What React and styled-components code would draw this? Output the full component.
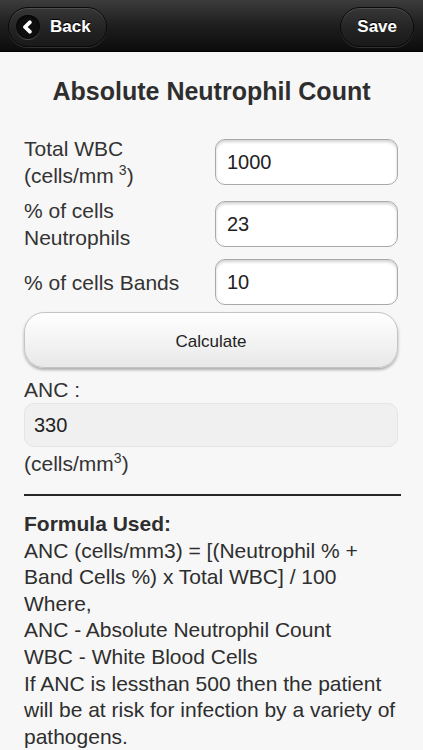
import React from 'react'
import styled, { createGlobalStyle } from 'styled-components'

const GlobalStyle = createGlobalStyle`
  html, body {
    margin: 0;
    padding: 0;
    background: #f7f7f7;
    font-family: "Liberation Sans", Arial, Helvetica, sans-serif;
    color: #333;
  }
`

const Page = styled.div`
  width: 423px;
  min-height: 750px;
  background: #f7f7f7;
  overflow: hidden;
`

const Header = styled.header`
  height: 52px;
  box-sizing: border-box;
  display: flex;
  align-items: center;
  justify-content: space-between;
  padding: 2px 9px 0 8px;
  background: linear-gradient(#3c3c3c, #1e1e1e 50%, #0c0c0c);
  border-bottom: 1px solid #000;
`

const NavButton = styled.button`
  height: 40px;
  box-sizing: border-box;
  display: flex;
  align-items: center;
  gap: 10px;
  padding: ${(p) => (p.$icon ? '0 15px 0 7px' : '0 16px')};
  border-radius: 20px;
  border: 1px solid #0a0a0a;
  background: linear-gradient(#363636, #222 60%, #1a1a1a);
  box-shadow: inset 0 1px 0 rgba(255, 255, 255, 0.12), 0 1px 0 rgba(255, 255, 255, 0.14);
  color: #fff;
  font-family: inherit;
  font-size: 17px;
  font-weight: bold;
  text-shadow: 0 -1px 0 #000;
`

const BackIcon = styled.span`
  width: 24px;
  height: 24px;
  border-radius: 50%;
  background: #0e0e0e;
  box-shadow: inset 0 1px 2px #000, 0 1px 0 rgba(255, 255, 255, 0.2);
  display: flex;
  align-items: center;
  justify-content: center;
`

const Title = styled.h1`
  margin: 24px 0 0;
  font-size: 25px;
  line-height: 30px;
  font-weight: bold;
  text-align: center;
  color: #2e2e2e;
`

const Content = styled.main`
  padding: 0 25px 0 24px;
`

const Form = styled.div`
  margin-top: 29px;
  display: flex;
  flex-direction: column;
  gap: 8px;
`

const Row = styled.div`
  display: grid;
  grid-template-columns: 1fr 183px;
  column-gap: 12px;
  align-items: center;
`

const Label = styled.label`
  font-size: 21px;
  line-height: 27px;
  color: #333;

  sup {
    font-size: 14px;
    line-height: 0;
    vertical-align: 8px;
    margin-left: 5px;
  }
`

const Input = styled.input`
  box-sizing: border-box;
  width: 183px;
  height: 46px;
  padding: 0 11px;
  border: 1px solid #a9a9a9;
  border-radius: 10px;
  background: #fff;
  box-shadow: inset 0 2px 3px rgba(0, 0, 0, 0.18);
  font-family: inherit;
  font-size: 20px;
  color: #222;
  outline: none;
`

const CalcButton = styled.button`
  display: block;
  width: 100%;
  height: 56px;
  margin-top: 7px;
  padding-top: 5px;
  border: 1px solid #c4c4c4;
  border-radius: 20px;
  background: linear-gradient(#ffffff, #f4f4f4 50%, #e8e8e8);
  box-shadow: 0 2px 3px rgba(0, 0, 0, 0.3);
  font-family: inherit;
  font-size: 17px;
  color: #222;
`

const ResultLabel = styled.div`
  margin-top: 8px;
  font-size: 21px;
  line-height: 27px;
`

const ResultBox = styled.div`
  box-sizing: border-box;
  height: 44px;
  display: flex;
  align-items: center;
  padding: 0 9px;
  border: 1px solid #e4e4e4;
  border-radius: 10px;
  background: #f0f0f0;
  font-size: 20px;
  color: #222;
`

const Unit = styled.div`
  margin-top: 3px;
  font-size: 21px;
  line-height: 27px;

  sup {
    font-size: 14px;
    line-height: 0;
    vertical-align: 8px;
  }
`

const Divider = styled.hr`
  margin: 17px -3px 0 0;
  border: none;
  height: 2px;
  background: #262626;
`

const Formula = styled.div`
  margin-top: 15px;
  font-size: 21px;
  line-height: 26.6px;
  color: #2e2e2e;
`

const FormulaLine = styled.div`
  white-space: nowrap;
  font-weight: ${(p) => (p.$bold ? 'bold' : 'normal')};
`

const fields = [
  { id: 'wbc', label: <>Total WBC<br />(cells/mm<sup>3</sup>)</>, value: '1000' },
  { id: 'neu', label: <>% of cells<br />Neutrophils</>, value: '23' },
  { id: 'band', label: <>% of cells Bands</>, value: '10' },
]

const formulaLines = [
  'ANC (cells/mm3) = [(Neutrophil % +',
  'Band Cells %) x Total WBC] / 100',
  'Where,',
  'ANC - Absolute Neutrophil Count',
  'WBC - White Blood Cells',
  'If ANC is lessthan 500 then the patient',
  'will be at risk for infection by a variety of',
  'pathogens.',
]

export default function App() {
  return (
    <Page>
      <GlobalStyle />
      <Header>
        <NavButton $icon>
          <BackIcon>
            <svg width="14" height="14" viewBox="0 0 14 14">
              <polyline points="8.8,2.3 4,7 8.8,11.7" fill="none" stroke="#fff" strokeWidth="3.8" strokeLinecap="round" strokeLinejoin="round" />
            </svg>
          </BackIcon>
          Back
        </NavButton>
        <NavButton>Save</NavButton>
      </Header>
      <Title>Absolute Neutrophil Count</Title>
      <Content>
        <Form>
          {fields.map((f) => (
            <Row key={f.id}>
              <Label htmlFor={f.id}>{f.label}</Label>
              <Input id={f.id} defaultValue={f.value} />
            </Row>
          ))}
        </Form>
        <CalcButton>Calculate</CalcButton>
        <ResultLabel>ANC :</ResultLabel>
        <ResultBox>330</ResultBox>
        <Unit>(cells/mm<sup>3</sup>)</Unit>
        <Divider />
        <Formula>
          <FormulaLine $bold>Formula Used:</FormulaLine>
          {formulaLines.map((l) => (
            <FormulaLine key={l}>{l}</FormulaLine>
          ))}
        </Formula>
      </Content>
    </Page>
  )
}
